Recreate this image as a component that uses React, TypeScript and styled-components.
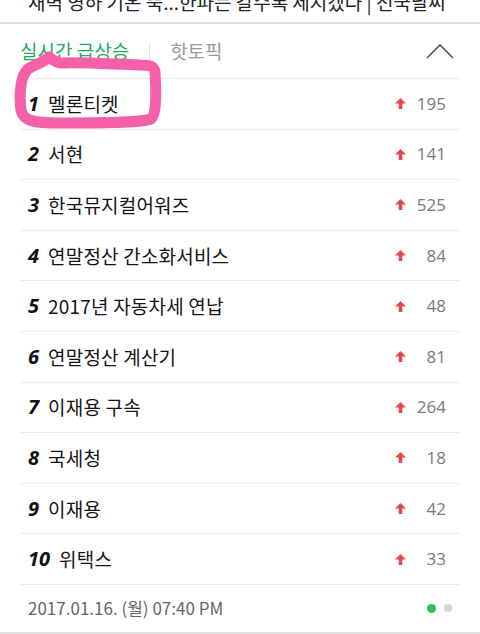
import { createGlobalStyle, styled } from "styled-components";

const GlobalStyle = createGlobalStyle`
  html, body {
    margin: 0;
    padding: 0;
    background: #fff;
  }
  body {
    font-family: "Noto Sans CJK KR", "Noto Sans", sans-serif;
    color: #111;
  }
`;

const Page = styled.div`
  position: relative;
  width: 480px;
  height: 634px;
  overflow: hidden;
  background: #fff;
`;

const TopStrip = styled.div`
  height: 22px;
  overflow: hidden;
  border-bottom: 2px solid #dedede;
  padding-left: 28px;
`;

const TopText = styled.div`
  font-size: 19px;
  line-height: 26px;
  white-space: nowrap;
  margin-top: -11px;
  color: #222;
`;

const Header = styled.div`
  height: 54px;
  display: flex;
  align-items: center;
  padding: 0 26px 0 20px;
`;

const Tab = styled.span<{ $active?: boolean }>`
  font-size: 19px;
  line-height: 24px;
  color: ${(p) => (p.$active ? "#1fa95b" : "#9a9a9a")};
`;

const TabDivider = styled.span`
  width: 1px;
  height: 18px;
  background: #e3e3e3;
  margin: 0 20px 0 20px;
`;

const Chevron = styled.svg`
  margin-left: auto;
  width: 28px;
  height: 16px;
`;

const List = styled.ol`
  list-style: none;
  margin: 0 20px;
  padding: 0;
`;

const Row = styled.li`
  height: 49.6px;
  border-top: 1px solid #ececec;
  display: flex;
  align-items: center;
  padding: 0 14px 0 8px;
`;

const Rank = styled.span`
  font-family: "Noto Sans", "Open Sans", sans-serif;
  font-weight: 700;
  font-style: italic;
  font-size: 20px;
  line-height: 24px;
  color: #111;
  margin-right: 9px;
`;

const Title = styled.span`
  font-size: 19px;
  line-height: 24px;
  color: #151515;
  letter-spacing: 0.2px;
  flex: 1;
`;

const Arrow = styled.svg`
  width: 11px;
  height: 11px;
  margin-right: 6px;
`;

const Count = styled.span`
  width: 34px;
  text-align: right;
  font-family: "Open Sans", "Noto Sans", sans-serif;
  font-size: 17px;
  line-height: 22px;
  color: #7a7a7a;
`;

const Footer = styled.div`
  height: 47px;
  margin: 0 20px;
  border-top: 1px solid #ececec;
  display: flex;
  align-items: center;
  padding: 0 8px 0 8px;
`;

const Stamp = styled.span`
  font-size: 17px;
  line-height: 20px;
  color: #666;
  flex: 1;
`;

const Dot = styled.span<{ $on?: boolean }>`
  width: ${(p) => (p.$on ? 9 : 8)}px;
  height: ${(p) => (p.$on ? 9 : 8)}px;
  border-radius: 50%;
  background: ${(p) => (p.$on ? "#26c35e" : "#d6d6d6")};
  margin-left: 8px;
`;

const BottomRule = styled.div`
  height: 2px;
  background: #e2e2e2;
`;

const Marker = styled.svg`
  position: absolute;
  left: 0;
  top: 0;
  width: 480px;
  height: 160px;
  pointer-events: none;
`;

const items = [
  { title: "멜론티켓", count: 195 },
  { title: "서현", count: 141 },
  { title: "한국뮤지컬어워즈", count: 525 },
  { title: "연말정산 간소화서비스", count: 84 },
  { title: "2017년 자동차세 연납", count: 48 },
  { title: "연말정산 계산기", count: 81 },
  { title: "이재용 구속", count: 264 },
  { title: "국세청", count: 18 },
  { title: "이재용", count: 42 },
  { title: "위택스", count: 33 },
];

function UpArrow() {
  return (
    <Arrow viewBox="0 0 11 11">
      <path d="M5.5 0 L11 5.6 L7.3 5.6 L7.3 11 L3.7 11 L3.7 5.6 L0 5.6 Z" fill="#e8474a" />
    </Arrow>
  );
}

export default function App() {
  return (
    <Page>
      <GlobalStyle />
      <TopStrip>
        <TopText>새벽 영하 기온 뚝...한파는 갈수록 세지겠다 | 전국날씨</TopText>
      </TopStrip>
      <Header>
        <Tab $active>실시간 급상승</Tab>
        <TabDivider />
        <Tab>핫토픽</Tab>
        <Chevron viewBox="0 0 28 16">
          <polyline points="1,15 14,2 27,15" fill="none" stroke="#555" strokeWidth="1.6" />
        </Chevron>
      </Header>
      <List>
        {items.map((it, i) => (
          <Row key={it.title}>
            <Rank>{i + 1}</Rank>
            <Title>{it.title}</Title>
            <UpArrow />
            <Count>{it.count}</Count>
          </Row>
        ))}
      </List>
      <Footer>
        <Stamp>2017.01.16. (월) 07:40 PM</Stamp>
        <Dot $on />
        <Dot />
      </Footer>
      <BottomRule />
      <Marker viewBox="0 0 480 160">
        <path
          d="M49 57 C44 62 36 64 28 69 C20 76 19 96 21 110 C23 121 34 123 60 123 C100 123 140 123 151 119 C157 114 156 90 155 72 C154 66 150 65 140 65 C110 64 80 62 62 63 C56 63 53 60 49 57 Z"
          fill="none"
          stroke="#f660a8"
          strokeWidth="11"
          strokeLinejoin="round"
          strokeLinecap="round"
        />
      </Marker>
    </Page>
  );
}
